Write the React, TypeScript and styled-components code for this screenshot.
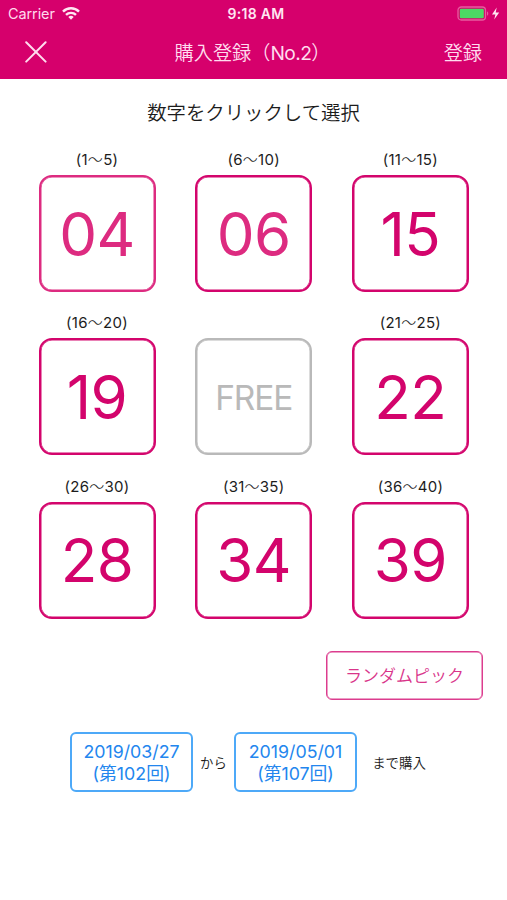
import React from "react";
import styled, { createGlobalStyle } from "styled-components";

const Global = createGlobalStyle`
  * { box-sizing: border-box; }
  body { margin: 0; background: #fff; }
  button { appearance: none; background: none; border: 0; margin: 0; padding: 0; font: inherit; color: inherit; }
`;

const Screen = styled.main`
  display: flex;
  flex-direction: column;
  width: 507px;
  height: 900px;
  overflow: hidden;
  background: #fff;
  color: #1c1c1c;
  font-family: Inter, "Noto Sans CJK JP", sans-serif;
`;

const Header = styled.header`
  height: 79px;
  background: #d6006c;
  color: #fff;
`;

const StatusBar = styled.div`
  display: grid;
  grid-template-columns: 1fr auto 1fr;
  align-items: center;
  height: 27px;
  padding: 0 6px 0 8px;
  font-size: 14.5px;
  line-height: 27px;
`;

const Carrier = styled.div`
  display: flex;
  align-items: center;
  gap: 7px;
  color: #ffd9ec;
  letter-spacing: -0.1px;
`;

const Clock = styled.div`
  font-weight: 600;
  font-size: 14px;
  letter-spacing: 0.3px;
  padding-left: 3px;
  color: #ffe6f2;
`;

const Power = styled.div`
  display: flex;
  justify-content: flex-end;
`;

const NavBar = styled.nav`
  display: grid;
  grid-template-columns: 1fr auto 1fr;
  align-items: center;
  height: 50px;
  padding: 0 25px;
  color: #ffdcee;
  font-size: 19.2px;
  font-weight: 350;
`;

const CloseButton = styled.button`
  display: flex;
  justify-self: start;
`;

const NavTitle = styled.h1`
  margin: 0;
  padding-right: 2px;
  font: inherit;
  white-space: nowrap;
`;

const Latin = styled.span`
  font-weight: 400;
  letter-spacing: -0.6px;
`;

const SaveButton = styled.button`
  justify-self: end;
`;

const Prompt = styled.p`
  margin: 21px 0 0;
  height: 26px;
  line-height: 26px;
  font-size: 19.4px;
  font-weight: 350;
  text-align: center;
`;

const Board = styled.section`
  display: grid;
  grid-template-columns: repeat(3, 117px);
  grid-auto-rows: 143px;
  column-gap: 39.7px;
  row-gap: 20.4px;
  padding: 23px 0 0 38.5px;
`;

const Cell = styled.div`
  display: flex;
  flex-direction: column;
`;

const Range = styled.div`
  height: 26px;
  line-height: 22px;
  font-size: 15px;
  letter-spacing: 0.25px;
  text-align: center;
`;

const Wave = styled.span`
  font-weight: 300;
`;

const Tile = styled.button<{ $tone: string; $ink: string; $free?: boolean }>`
  display: flex;
  align-items: center;
  justify-content: center;
  width: 117px;
  height: 117px;
  padding-top: ${(p) => (p.$free ? 3 : 0)}px;
  border: 2px solid ${(p) => p.$tone};
  box-shadow: inset 0 0 0 0.5px ${(p) => p.$tone};
  border-radius: 13px;
  color: ${(p) => p.$ink};
  font-size: ${(p) => (p.$free ? 33.5 : 60)}px;
  font-weight: ${(p) => (p.$free ? 370 : 400)};
  letter-spacing: ${(p) => (p.$free ? -1.2 : -0.5)}px;
  line-height: 1;
`;

const Actions = styled.div`
  display: flex;
  justify-content: flex-end;
  padding: 32px 24px 0 0;
`;

const RandomButton = styled.button`
  width: 157px;
  height: 49px;
  border: 1px solid #dc3c8e;
  box-shadow: inset 0 0 0 0.5px #dc3c8e;
  border-radius: 6px;
  color: #d9358a;
  font-size: 17px;
  font-weight: 350;
  line-height: 47px;
  padding-top: 1px;
`;

const Period = styled.div`
  display: flex;
  align-items: center;
  padding: 32px 0 0 70px;
  font-size: 13.4px;
`;

const DateButton = styled.button`
  width: 123px;
  height: 60px;
  padding-top: 2px;
  border: 2px solid #4da9f8;
  border-radius: 6px;
  color: #2386ee;
  font-size: 17.8px;
  font-weight: 380;
  line-height: 22px;
`;

const Joiner = styled.span<{ $width: number }>`
  width: ${(p) => p.$width}px;
  text-align: center;
  white-space: nowrap;
  font-weight: 350;
`;

const WifiIcon = () => (
  <svg width="18" height="13" viewBox="0 0 18 13" fill="none" stroke="#ffe6f2" strokeWidth="2.4">
    <path d="M1 4.6a11.3 11.3 0 0 1 16 0" />
    <path d="M4 7.9a7.1 7.1 0 0 1 10 0" />
    <path d="M6.3 10 9 12.8 11.7 10a3.9 3.9 0 0 0-5.4 0Z" fill="#ffe6f2" stroke="none" />
  </svg>
);

const BatteryIcon = () => (
  <svg width="44" height="15" viewBox="0 0 44 15">
    <rect x="1" y="1" width="27.5" height="13" rx="3.3" fill="none" stroke="#e65c9f" strokeWidth="1.3" />
    <rect x="2.8" y="2.8" width="24" height="9.4" rx="1.3" fill="#4cd964" />
    <path d="M30 5.4c1.7.5 1.7 3.7 0 4.2Z" fill="#e65c9f" />
    <path d="M39.7 1.5 35 8.4h3.4l-1.2 5.1 5-6.9h-3.5Z" fill="#ffe6f2" />
  </svg>
);

const CloseIcon = () => (
  <svg width="22" height="22" viewBox="0 0 22 22" stroke="#ffdcee" strokeWidth="2" strokeLinecap="round">
    <path d="m1.2 1.2 19.4 19.4M20.6 1.2 1.2 20.6" />
  </svg>
);

const PINK = "#d3046c";
const SOFT = "#dd2b80";
const GRAY = "#b9b9b9";

type CellData = {
  from?: number;
  to?: number;
  value: string;
  tone: string;
  ink: string;
  free?: boolean;
};

const cells: CellData[] = [
  { from: 1, to: 5, value: "04", tone: SOFT, ink: SOFT },
  { from: 6, to: 10, value: "06", tone: PINK, ink: SOFT },
  { from: 11, to: 15, value: "15", tone: PINK, ink: PINK },
  { from: 16, to: 20, value: "19", tone: PINK, ink: PINK },
  { value: "FREE", tone: GRAY, ink: GRAY, free: true },
  { from: 21, to: 25, value: "22", tone: PINK, ink: PINK },
  { from: 26, to: 30, value: "28", tone: PINK, ink: PINK },
  { from: 31, to: 35, value: "34", tone: PINK, ink: PINK },
  { from: 36, to: 40, value: "39", tone: PINK, ink: PINK },
];

export default function App() {
  return (
    <Screen>
      <Global />
      <Header>
        <StatusBar>
          <Carrier>Carrier<WifiIcon /></Carrier>
          <Clock>9:18 AM</Clock>
          <Power><BatteryIcon /></Power>
        </StatusBar>
        <NavBar>
          <CloseButton aria-label="閉じる"><CloseIcon /></CloseButton>
          <NavTitle>購入登録（<Latin>No.2</Latin>）</NavTitle>
          <SaveButton>登録</SaveButton>
        </NavBar>
      </Header>
      <Prompt>数字をクリックして選択</Prompt>
      <Board>
        {cells.map((c) => (
          <Cell key={c.value}>
            <Range>{!c.free && <>({c.from}<Wave>〜</Wave>{c.to})</>}</Range>
            <Tile $tone={c.tone} $ink={c.ink} $free={c.free}>{c.value}</Tile>
          </Cell>
        ))}
      </Board>
      <Actions><RandomButton>ランダムピック</RandomButton></Actions>
      <Period>
        <DateButton>2019/03/27<br />(第102回)</DateButton>
        <Joiner $width={41}>から</Joiner>
        <DateButton>2019/05/01<br />(第107回)</DateButton>
        <Joiner $width={84}>まで購入</Joiner>
      </Period>
    </Screen>
  );
}
